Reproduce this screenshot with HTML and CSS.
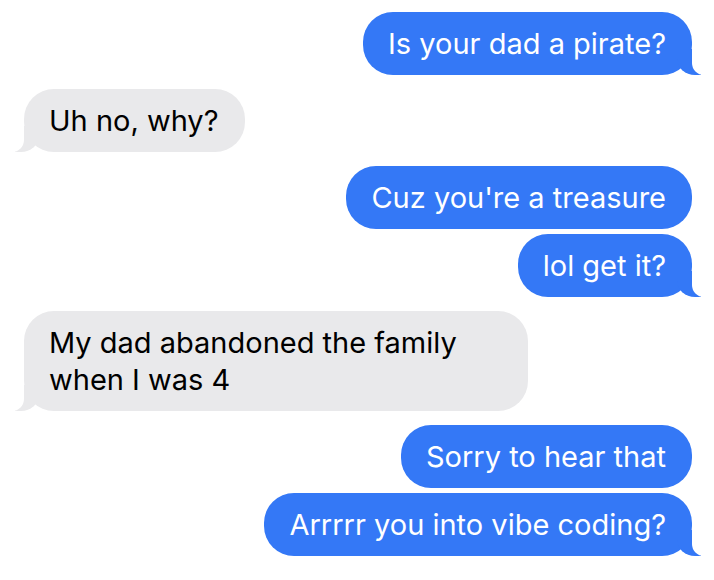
FILE: index.html
```html
<!DOCTYPE html>
<html lang="en">
<head>
  <meta charset="UTF-8" />
  <meta name="viewport" content="width=device-width, initial-scale=1.0" />
  <title>Messages</title>
  <link rel="stylesheet" href="styles.css">
</head>
<body>
  <div class="chat">
    <div class="group sent">
      <div class="bubble tail">Is your dad a pirate?</div>
    </div>
    <div class="group received">
      <div class="bubble tail">Uh no, why?</div>
    </div>
    <div class="group sent">
      <div class="bubble">Cuz you're a treasure</div>
      <div class="bubble tail">lol get it?</div>
    </div>
    <div class="group received">
      <div class="bubble tail">My dad abandoned the family when I was 4</div>
    </div>
    <div class="group sent">
      <div class="bubble">Sorry to hear that</div>
      <div class="bubble tail">Arrrrr you into vibe coding?</div>
    </div>
  </div>
</body>
</html>
```

FILE: styles.css
```css
* {
  box-sizing: border-box;
  margin: 0;
  padding: 0;
}
body {
  background-color: #fff;
  font-family: Inter, "Noto Sans", sans-serif;
}
.chat {
  display: flex;
  flex-direction: column;
  gap: 14px;
  padding: 12px 22px 0 24px;
}
.group {
  display: flex;
  flex-direction: column;
  gap: 5px;
}
.sent {
  align-items: flex-end;
}
.received {
  align-items: flex-start;
}
.bubble {
  position: relative;
  max-width: 504px;
  font-size: 29px;
  line-height: 37px;
  padding: 13px 26px 13px 25px;
  border-radius: 30px;
}
.sent .bubble {
  background-color: #3478f6;
  color: #fff;
}
.received .bubble {
  background-color: #e9e9eb;
  color: #000;
}
.bubble.tail::before,
.bubble.tail::after {
  content: "";
  position: absolute;
  bottom: 0;
  height: 26px;
}
.sent .bubble.tail::before {
  right: -9px;
  width: 24px;
  background-color: #3478f6;
  border-bottom-left-radius: 18px 16px;
}
.sent .bubble.tail::after {
  right: -28px;
  width: 28px;
  background-color: #fff;
  border-bottom-left-radius: 12px;
}
.received .bubble.tail::before {
  left: -9px;
  width: 24px;
  background-color: #e9e9eb;
  border-bottom-right-radius: 18px 16px;
}
.received .bubble.tail::after {
  left: -28px;
  width: 28px;
  background-color: #fff;
  border-bottom-right-radius: 12px;
}
```
